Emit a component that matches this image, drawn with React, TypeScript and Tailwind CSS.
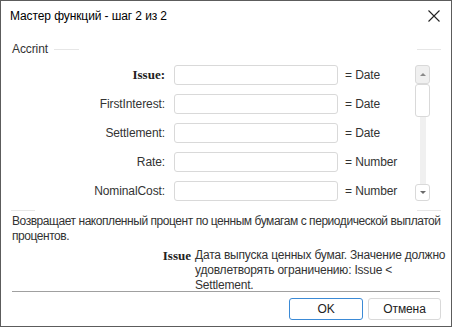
import React from "react";

const fields = [
  { name: "Issue", type: "Date", bold: true },
  { name: "FirstInterest", type: "Date" },
  { name: "Settlement", type: "Date" },
  { name: "Rate", type: "Number" },
  { name: "NominalCost", type: "Number" },
];

const ui = { fontFamily: '"Liberation Sans", Arial, sans-serif' };
const serif = { fontFamily: '"Liberation Serif", "DejaVu Serif", serif' };

const Scrollbar = () => (
  <div className="flex w-[15px] flex-col items-center">
    <div className="flex h-[19px] w-[15px] items-center justify-center rounded-[3px] border border-[#d9d9d9] bg-[#f0f0f0]">
      <div className="h-0 w-0 border-x-[3px] border-b-[3px] border-x-transparent border-b-[#8a8a8a]" />
    </div>
    <div className="h-[33px] w-[15px] rounded-[3px] border border-[#d9d9d9] bg-white" />
    <div className="w-[6px] flex-1 bg-[#f0f0f0]" />
    <div className="flex h-[17px] w-[15px] items-center justify-center rounded-[3px] border border-[#d9d9d9] bg-white">
      <div className="h-0 w-0 border-x-[3px] border-t-[3px] border-x-transparent border-t-[#6a6a6a]" />
    </div>
  </div>
);

export default function App() {
  return (
    <div
      className="flex h-[327px] w-[452px] flex-col border border-[#5c5c5c] bg-white text-[12px] tracking-[-0.1px] text-[#333]"
      style={ui}
    >
      {/* title bar */}
      <div className="flex h-[30px] shrink-0 items-center justify-between pl-[9px] pr-[10px]">
        <span className="text-[12px] text-black">Мастер функций - шаг 2 из 2</span>
        <svg width="12" height="12" viewBox="0 0 12 12" className="mr-[1px]">
          <path d="M0.5 0.5 L11.5 11.5 M11.5 0.5 L0.5 11.5" stroke="#222" strokeWidth="1.1" />
        </svg>
      </div>

      {/* group */}
      <div className="flex flex-col px-[10px] pt-[11px]">
        <div className="flex h-[14px] items-center">
          <span className="pl-[1px] leading-none">Accrint</span>
          <div className="ml-[6px] h-px w-[25px] bg-[#e6e6e6]" />
          <div className="flex-1" />
          <div className="h-px w-[24px] bg-[#e6e6e6]" />
        </div>

        <div className="mt-[9px] flex">
          <div className="flex flex-col gap-[9px]">
            {fields.map((f) => (
              <div key={f.name} className="flex h-[20px] items-center">
                <span
                  className={`w-[155px] pr-[1px] text-right ${f.bold ? "text-[13px] font-bold tracking-normal text-[#222]" : ""}`}
                  style={f.bold ? serif : undefined}
                >
                  {f.name}:
                </span>
                <div className="ml-[8px] h-[20px] w-[164px] rounded-[3px] border border-[#d9d9d9] bg-white" />
                <span className="ml-[7px] w-[60px] whitespace-nowrap">= {f.type}</span>
              </div>
            ))}
          </div>
          <div className="ml-[10px] flex">
            <Scrollbar />
          </div>
        </div>

        <div className="mt-[9px] flex">
          <div className="h-px w-[24px] bg-[#e6e6e6]" />
          <div className="flex-1" />
          <div className="h-px w-[24px] bg-[#e6e6e6]" />
        </div>
      </div>

      {/* description */}
      <div className="whitespace-nowrap px-[11px] pt-[3px] leading-[15px] tracking-[-0.45px]">
        Возвращает накопленный процент по ценным бумагам с периодической выплатой
        <br />
        процентов.
      </div>

      <div className="mt-[4px] flex leading-[15px]">
        <span className="w-[194px] pr-[4px] text-right text-[13px] font-bold tracking-normal text-[#222]" style={serif}>
          Issue
        </span>
        <span className="whitespace-nowrap tracking-[-0.2px]">
          Дата выпуска ценных бумаг. Значение должно
          <br />
          удовлетворять ограничению: Issue &lt;
          <br />
          Settlement.
        </span>
      </div>

      <div className="mx-[11px] mt-[-2px] h-px bg-[#a0a0a0]" />

      {/* buttons */}
      <div className="flex justify-end gap-[5px] pr-[10px] pt-[6px]">
        <button className="h-[22px] w-[74px] rounded-[3px] border border-[#3b8ad6] bg-white text-[#222]">
          OK
        </button>
        <button className="h-[22px] w-[73px] rounded-[3px] border border-[#d9d9d9] bg-white text-[#222]">
          Отмена
        </button>
      </div>
    </div>
  );
}
